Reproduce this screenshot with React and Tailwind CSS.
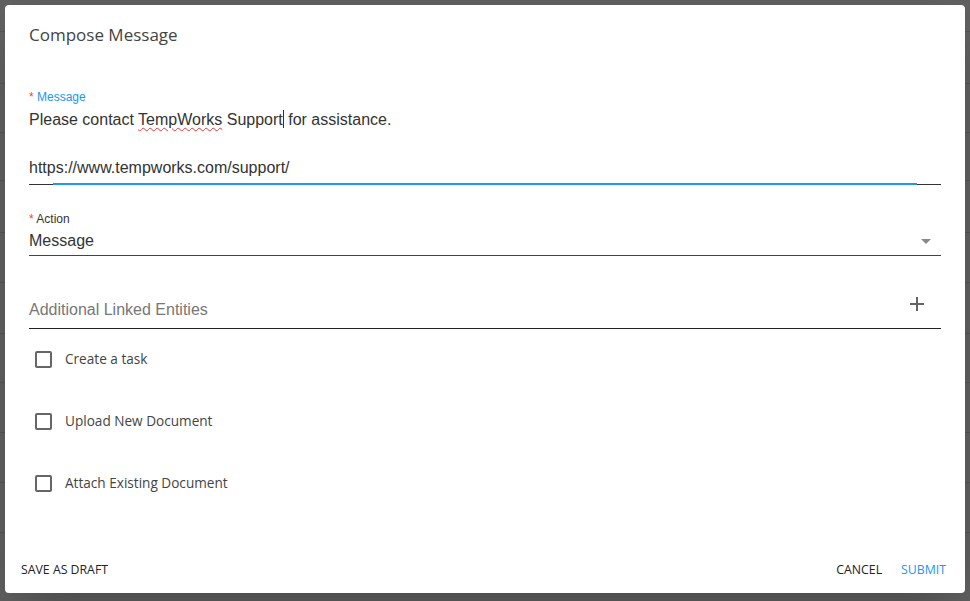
import React from "react";

const sans = "font-['Open_Sans',sans-serif]";
const arial = "font-['Liberation_Sans',Arial,sans-serif]";

function CheckRow({ label }) {
  return (
    <label className="flex h-[62px] items-center">
      <span className="-mt-px ml-[6px] block h-[17px] w-[17px] rounded-[2px] border-2 border-[#666]" />
      <span className={`${sans} -mt-px ml-[13px] text-[13.6px] text-[#444]`}>{label}</span>
    </label>
  );
}

export default function App() {
  const rows = [52, 49, 48, 52, 50, 51, 49, 50, 50, 50, 50];

  return (
    <div className="relative h-[601px] w-full overflow-hidden bg-[#606060]">
      {/* page behind the modal */}
      <div className="flex flex-col pt-[31px]">
        {rows.map((h, i) => (
          <div key={i} className="border-t border-[#545454]" style={{ height: h }} />
        ))}
      </div>

      <div className="absolute left-[5px] top-[5px] flex h-[588px] w-[960px] flex-col rounded bg-white shadow-2xl">
        <div className="flex h-[60px] items-center px-6">
          <h2 className={`${sans} text-[17px] text-[#444]`}>Compose Message</h2>
        </div>

        <div className="px-6">
          {/* message */}
          <div className="mt-6">
            <div className={`${arial} h-4 text-[12px] leading-4 text-[#2196f3]`}>
              <span className="text-[#f44336]">*</span> Message
            </div>
            <div className={`${arial} mt-[2px] pb-[3px] text-[16px] leading-6 text-[#333]`}>
              <div>
                Please contact{" "}
                <span className="underline decoration-[#e53935] decoration-wavy decoration-1 underline-offset-2">TempWorks</span>{" "}
                Support<span className="inline-block h-[18px] w-px translate-y-[3px] bg-[#333]" /> for assistance.
              </div>
              <div className="h-6" />
              <div>https://www.tempworks.com/support/</div>
            </div>
            <div className="relative h-[2px]">
              <div className="absolute bottom-0 left-0 right-0 h-px bg-[#333]" />
              <div className="absolute left-6 right-6 top-0 h-[2px] bg-[#2196f3]" />
            </div>
          </div>

          {/* action */}
          <div className="mt-[26px] border-b border-[#444]">
            <div className={`${arial} h-4 text-[12px] leading-4 text-[#333]`}>
              <span className="text-[#f44336]">*</span> Action
            </div>
            <div className={`${arial} mt-[2px] flex items-center justify-between pb-[2px] text-[16px] leading-6 text-[#333]`}>
              <span>Message</span>
              <span className="mr-[10px] h-0 w-0 border-l-[5px] border-r-[5px] border-t-[5px] border-l-transparent border-r-transparent border-t-[#888]" />
            </div>
          </div>

          {/* linked entities */}
          <div className={`${arial} mt-[42px] flex items-center justify-between border-b border-[#222] pb-[6px] text-[16px] leading-6 text-[#777]`}>
            <span>Additional Linked Entities</span>
            <svg className="mr-[17px] -translate-y-[6px]" width="14" height="14" viewBox="0 0 14 14">
              <path d="M7 0v14M0 7h14" stroke="#666" strokeWidth="2" />
            </svg>
          </div>

          <CheckRow label="Create a task" />
          <CheckRow label="Upload New Document" />
          <CheckRow label="Attach Existing Document" />
        </div>

        <div className={`${sans} mt-auto flex h-12 items-center justify-between pl-4 pr-[19px] pt-[2px] text-[12.3px]`}>
          <button className="uppercase text-[#222]">Save as draft</button>
          <div className="flex items-center gap-[19px]">
            <button className="uppercase text-[#222]">Cancel</button>
            <button className="uppercase text-[#2196f3]">Submit</button>
          </div>
        </div>
      </div>
    </div>
  );
}
